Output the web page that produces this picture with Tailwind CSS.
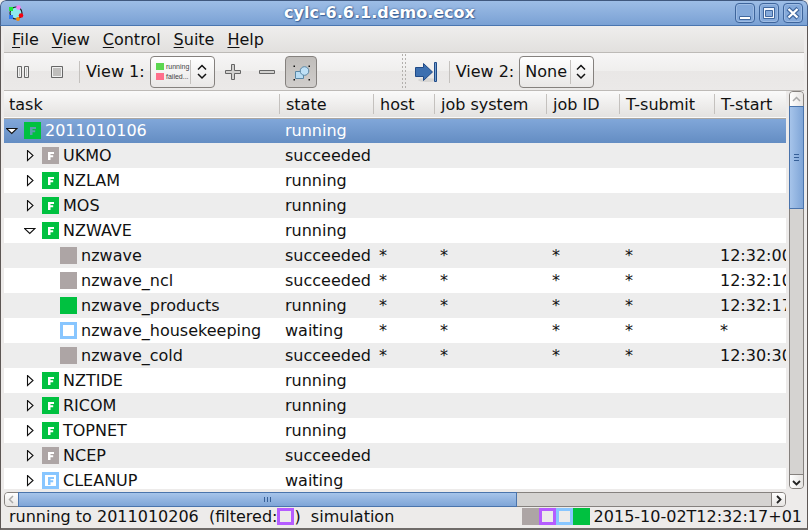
<!DOCTYPE html>
<html lang="en">
<head>
<meta charset="utf-8">
<title>cylc-6.6.1.demo.ecox</title>
<script src="https://cdn.jsdelivr.net/npm/@tailwindcss/browser@4"></script>
</head>
<body class="flex h-screen flex-col overflow-hidden rounded-t-md bg-[#edebea] font-['DejaVu_Sans',sans-serif] text-[16px] leading-5 text-[#111]">

<svg class="hidden" aria-hidden="true">
  <symbol id="f" viewBox="0 0 8 8"><path d="M1 0H7V2H3.500V3.300H6.200V5.200H3.500V8H1Z" fill="currentColor"/></symbol>
  <symbol id="closed" viewBox="0 0 12 12"><path d="M3.500 .5V10.500L9 5.500Z" fill="#fff" stroke="#111" stroke-width="1.100"/></symbol>
  <symbol id="open" viewBox="0 0 12 12"><path d="M.5 3.500H11L5.750 8.500Z" fill="#fff" stroke="#111" stroke-width="1.100"/></symbol>
  <symbol id="updown" viewBox="0 0 10 16"><path d="M1 5.500L5 1.500L9 5.500M1 10L5 14L9 10" fill="none" stroke="#111" stroke-width="1.500"/></symbol>
</svg>

<header class="flex h-[26px] shrink-0 items-center rounded-t-md border border-b-[#4a76b0] border-l-[#46608a] border-r-[#46608a] border-t-[#40587e] bg-linear-to-b from-[#9dbde6] to-[#7aa1d4] pl-[7px] pr-1">
  <svg class="size-4 shrink-0" viewBox="0 0 16 16">
    <circle cx="8" cy="8" r="6" fill="#8fe9ee" stroke="#222" stroke-width="1.200"/>
    <path d="M1 2H5V6H1Z" fill="#1fe838"/><path d="M1 10H5V14H1Z" fill="#2f7df5"/>
    <circle cx="10.500" cy="2.500" r="2.300" fill="#f77cf2"/><circle cx="13" cy="10.500" r="2.300" fill="#f80010"/><circle cx="10" cy="14" r="2" fill="#f78a0c"/>
  </svg>
  <h1 class="flex-1 text-center font-bold text-white [text-shadow:0_0_2px_#2f568c,1px_1px_1px_#41689f]">cylc-6.6.1.demo.ecox</h1>
  <div class="flex gap-1">
    <button aria-label="Minimize" class="size-5 rounded-[4px] border border-[#3e659c] bg-[#84a9da] shadow-[inset_0_0_0_1px_#9ebce4]"><svg viewBox="0 0 18 18"><path d="M3.500 12.500H14.500V15.500H3.500Z" fill="#fff" stroke="#41689f"/></svg></button>
    <button aria-label="Maximize" class="size-5 rounded-[4px] border border-[#3e659c] bg-[#84a9da] shadow-[inset_0_0_0_1px_#9ebce4]"><svg viewBox="0 0 18 18"><path d="M3.500 3.500H14.500V14.500H3.500Z" fill="#f2f6fc" stroke="#41689f"/><path d="M5.500 6.500H12.500V12.500H5.500Z" fill="#84a9da" stroke="#41689f"/></svg></button>
    <button aria-label="Close" class="size-5 rounded-[4px] border border-[#3e659c] bg-[#84a9da] shadow-[inset_0_0_0_1px_#9ebce4]"><svg viewBox="0 0 18 18"><path d="M4 4.500L14 14M14 4.500L4 14" stroke="#41689f" stroke-width="4.500"/><path d="M4.500 5L13.500 13.500M13.500 5L4.500 13.500" stroke="#fff" stroke-width="2.300"/></svg></button>
  </div>
</header>

<div class="flex min-h-0 flex-1 flex-col border-b-2 border-l border-r border-b-[#6f6b69] border-l-[#5c5654] border-r-[#5c5654] px-[3px]">
  <nav class="flex h-[27px] shrink-0 items-center gap-[13px] border-b border-[#bdbab7] bg-linear-to-b from-[#efeeed] to-[#e2e0de] pl-2 pt-[2px]" aria-label="Menu">
    <button><u class="underline-offset-2">F</u>ile</button>
    <button><u class="underline-offset-2">V</u>iew</button>
    <button><u class="underline-offset-2">C</u>ontrol</button>
    <button><u class="underline-offset-2">S</u>uite</button>
    <button><u class="underline-offset-2">H</u>elp</button>
  </nav>

  <div class="flex h-[38px] shrink-0 items-center border-b border-[#bdbab7] bg-[linear-gradient(#f7f6f6,#efeeed_50%,#e9e7e6_50%,#ebe9e8)]" role="toolbar">
    <button aria-label="Pause" class="ml-3"><svg class="h-4 w-[14px]" viewBox="0 0 14 16"><path d="M1.500 2.500H5.500V13.500H1.500ZM8.500 2.500H12.500V13.500H8.500Z" fill="#c4c3c1" stroke="#666"/><path d="M2.500 3.500H4.500V12.500H2.500ZM9.500 3.500H11.500V12.500H9.500Z" fill="none" stroke="#f4f4f4"/></svg></button>
    <button aria-label="Stop" class="ml-5"><svg class="h-4 w-[14px]" viewBox="0 0 14 16"><path d="M1.500 2.500H12.500V13.500H1.500Z" fill="#bfbebc" stroke="#666"/><path d="M2.500 3.500H11.500V12.500H2.500Z" fill="none" stroke="#f0f0f0"/></svg></button>
    <span class="ml-[15px] h-[22px] w-px bg-[#c4c1be]"></span>
    <label for="v1" class="ml-[6px]">View 1:</label>
    <div class="relative ml-[5px] flex h-8 w-[65px] shrink-0 items-center rounded-[4px] border border-[#85817e] bg-linear-to-b from-white to-[#e9e7e6] pl-[5px]">
      <svg class="h-[22px] w-[34px]" viewBox="0 0 34 22"><path d="M0 2H8V9H0Z" fill="#5cd650"/><path d="M0 12H8V19H0Z" fill="#ff6f8c"/><g font-family="Liberation Sans, sans-serif" font-size="7" fill="#444"><text x="10" y="8">running</text><text x="10" y="18">failed...</text></g></svg>
      <span class="h-6 w-px bg-[#c4c1be]"></span>
      <svg class="ml-[6px] h-4 w-[10px]"><use href="#updown"/></svg>
      <select id="v1" class="absolute inset-0 opacity-0"><option>Tree</option><option>Dot</option></select>
    </div>
    <button aria-label="Expand all" class="ml-[9px]"><svg class="size-[18px]" viewBox="0 0 18 18"><path d="M7.500 1.500H10.500V7.500H16.500V10.500H10.500V16.500H7.500V10.500H1.500V7.500H7.500Z" fill="#d2d1cf" stroke="#666"/></svg></button>
    <button aria-label="Collapse all" class="ml-4"><svg class="size-[18px]" viewBox="0 0 18 18"><path d="M1.500 7.500H16.500V10.500H1.500Z" fill="#d2d1cf" stroke="#666"/></svg></button>
    <button aria-label="Group families" aria-pressed="true" class="ml-[9px] size-8 rounded-[4px] border border-[#85817e] bg-linear-to-b from-[#c0bdba] to-[#d0cdcb]"><svg class="ml-[6px] size-5" viewBox="0 0 20 20"><path d="M3.500 9.500H11.500V16.500H3.500Z" fill="#b8dcf4" stroke="#5a87a5"/><circle cx="12.500" cy="9" r="4.300" fill="#bfe0f6" stroke="#5a87a5"/><path d="M1.500 3.500H3V5H1.500ZM16.500 3.500H18V5H16.500ZM1.500 17H3V18.500H1.500ZM16.500 17H18V18.500H16.500Z" fill="#111"/></svg></button>
    <span class="ml-[84px] h-full w-[6px] bg-[radial-gradient(#b3b0ad_1px,transparent_1px)] bg-[size:3px_4px]"></span>
    <button aria-label="Jump to end" class="ml-2"><svg class="h-[22px] w-[23px]" viewBox="0 0 23 22"><ellipse cx="12" cy="19" rx="9" ry="2" fill="#d7d5d3"/><path d="M.5 6.500H8.500V2.500L17.500 11L8.500 19.500V15.500H.5Z" fill="#3c6fb0" stroke="#204a87"/><path d="M19.500 1.500H21.500V20.500H19.500Z" fill="#729fcf" stroke="#204a87"/></svg></button>
    <span class="ml-[11px] h-[22px] w-px bg-[#c4c1be]"></span>
    <label for="v2" class="ml-[6px]">View 2:</label>
    <div class="relative ml-[5px] h-8 w-[75px] shrink-0">
      <select id="v2" class="h-full w-full appearance-none rounded-[4px] border border-[#85817e] bg-linear-to-b from-white to-[#e9e7e6] pl-[5px]"><option>None</option><option>Tree</option></select>
      <span class="pointer-events-none absolute right-[23px] top-1 h-6 w-px bg-[#c4c1be]"></span>
      <svg class="pointer-events-none absolute right-2 top-2 h-4 w-[10px]"><use href="#updown"/></svg>
    </div>
  </div>

  <main class="flex min-h-0 flex-1 gap-[3px]">
    <div class="min-w-0 flex-1 overflow-hidden bg-white">
      <table class="w-full table-fixed border-collapse whitespace-nowrap text-left">
        <colgroup><col class="w-[276px]"><col class="w-[94px]"><col class="w-[61px]"><col class="w-[112px]"><col class="w-[73px]"><col class="w-[95px]"><col></colgroup>
        <thead><tr id="head" class="h-[27px] border-b border-[#aaa6a2] bg-linear-to-b from-[#fafafa] to-[#e4e2e0]"></tr></thead>
        <tbody id="rows"></tbody>
      </table>
    </div>
    <div class="flex w-[15px] shrink-0 flex-col rounded-[4px] border border-[#85817e] bg-[#d5d3d1]" role="scrollbar" aria-orientation="vertical" aria-controls="rows" aria-valuenow="0">
      <button aria-label="Scroll up" class="h-[14px] shrink-0 rounded-t-[3px] bg-linear-to-r from-white to-[#e6e4e2]"><svg class="mx-auto h-3 w-[13px]" viewBox="0 0 13 12"><path d="M3 8L6.500 4.500L10 8" fill="none" stroke="#aaa" stroke-width="1.500"/></svg></button>
      <div class="-mx-px flex h-[26%] flex-col items-center justify-center gap-[2px] border border-[#4a74ac] bg-linear-to-r from-[#a6c4ea] to-[#7fa5d7]"><i class="h-px w-[5px] bg-[#365f97]"></i><i class="h-px w-[5px] bg-[#365f97]"></i><i class="h-px w-[5px] bg-[#365f97]"></i></div>
      <button aria-label="Scroll down" class="mt-auto h-[14px] shrink-0 rounded-b-[3px] border-t border-[#85817e] bg-linear-to-r from-white to-[#e6e4e2]"><svg class="h-3 w-[13px]" viewBox="0 0 13 12"><path d="M3 5L6.500 8.500L10 5" fill="none" stroke="#222" stroke-width="1.800"/></svg></button>
    </div>
  </main>

  <div class="mr-[18px] mt-[3px] flex h-[15px] shrink-0 rounded-[4px] border border-[#85817e] bg-[#d5d3d1]" role="scrollbar" aria-orientation="horizontal" aria-controls="rows" aria-valuenow="0">
    <button aria-label="Scroll left" class="w-[13px] rounded-l-[3px] bg-linear-to-b from-white to-[#e6e4e2]"><svg class="h-[13px] w-[13px]" viewBox="0 0 13 13"><path d="M8 3L4.500 6.500L8 10" fill="none" stroke="#aaa" stroke-width="1.500"/></svg></button>
    <div class="-my-px flex w-[64%] items-center justify-center gap-[2px] border border-[#4a74ac] bg-linear-to-b from-[#a6c4ea] to-[#7fa5d7]"><i class="h-[5px] w-px bg-[#365f97]"></i><i class="h-[5px] w-px bg-[#365f97]"></i><i class="h-[5px] w-px bg-[#365f97]"></i></div>
    <button aria-label="Scroll right" class="ml-auto w-[14px] rounded-r-[3px] border-l border-[#85817e] bg-linear-to-b from-white to-[#e6e4e2]"><svg class="h-[13px] w-[13px]" viewBox="0 0 13 13"><path d="M5 3L8.500 6.500L5 10" fill="none" stroke="#222" stroke-width="1.800"/></svg></button>
  </div>

  <footer class="flex h-[21px] shrink-0 items-center whitespace-pre pb-[2px] pl-[5px] pr-[2px]">
    <span>running to 2011010206  (filtered:</span><i class="size-[17px] border-[3px] border-[#b55cff]"></i><span>)  simulation</span>
    <span class="ml-auto flex pr-1"><i class="size-[17px] bg-[#ada5a5]"></i><i class="size-[17px] border-[3px] border-[#b55cff]"></i><i class="size-[17px] border-[3px] border-[#88c6ff]"></i><i class="size-[17px] bg-[#00c140]"></i></span>
    <time datetime="2015-10-02T12:32:17+01">2015-10-02T12:32:17+01</time>
  </footer>
</div>

<script>
  const heads = ['task', 'state', 'host', 'job system', 'job ID', 'T-submit', 'T-start'];
  document.getElementById('head').innerHTML = heads.map((h, i) =>
    `<th class="p-0 font-normal"><div class="flex h-5 items-center pt-px ${i ? 'pl-[6px]' : 'pl-[5px]'} ${i < 6 ? 'border-r border-[#c4c1be]' : ''}">${h}</div></th>`).join('');

  // [level, name, state, expander, T-start]
  const rows = [
    [0, '2011010106', 'running', 'open'],
    [1, 'UKMO', 'succeeded', 'closed'],
    [1, 'NZLAM', 'running', 'closed'],
    [1, 'MOS', 'running', 'closed'],
    [1, 'NZWAVE', 'running', 'open'],
    [2, 'nzwave', 'succeeded', '', '12:32:00'],
    [2, 'nzwave_ncl', 'succeeded', '', '12:32:10'],
    [2, 'nzwave_products', 'running', '', '12:32:17'],
    [2, 'nzwave_housekeeping', 'waiting', '', '*'],
    [2, 'nzwave_cold', 'succeeded', '', '12:30:30'],
    [1, 'NZTIDE', 'running', 'closed'],
    [1, 'RICOM', 'running', 'closed'],
    [1, 'TOPNET', 'running', 'closed'],
    [1, 'NCEP', 'succeeded', 'closed'],
    [1, 'CLEANUP', 'waiting', 'closed'],
  ];
  const indent = ['pl-[2px]', 'pl-5', 'pl-[38px]'];
  const tile = {
    running: 'bg-[#00c140] text-white',
    succeeded: 'bg-[#ada5a5] text-white',
    waiting: 'border-[3px] border-[#88c6ff] bg-white text-[#88c6ff]',
  };
  document.getElementById('rows').innerHTML = rows.map(([level, name, state, exp, start], i) => {
    const look = i === 0 ? 'bg-linear-to-b from-[#82a8da] to-[#648dc3] text-white' : i % 2 ? 'bg-[#ededed]' : 'bg-white';
    const arrow = exp ? `<button class="w-3" aria-label="Toggle ${name}"><svg class="size-3"><use href="#${exp}"/></svg></button>` : '<span class="w-3"></span>';
    const f = exp ? `<svg class="size-2 shrink-0 ${i === 0 ? 'text-[#5f9bb0]' : ''}"><use href="#f"/></svg>` : '';
    const rest = start ? ['*', '*', '*', '*', start] : ['', '', '', '', ''];
    return `<tr class="h-[25px] ${look}"><td class="p-0"><div class="flex items-center ${indent[level]}">${arrow}<i class="ml-[6px] mr-1 flex size-[17px] items-center justify-center ${tile[state]}">${f}</i>${name}</div></td>` +
      [state, ...rest].map(t => `<td class="overflow-hidden p-0 pl-[5px]">${t}</td>`).join('') + '</tr>';
  }).join('');
</script>
</body>
</html>
